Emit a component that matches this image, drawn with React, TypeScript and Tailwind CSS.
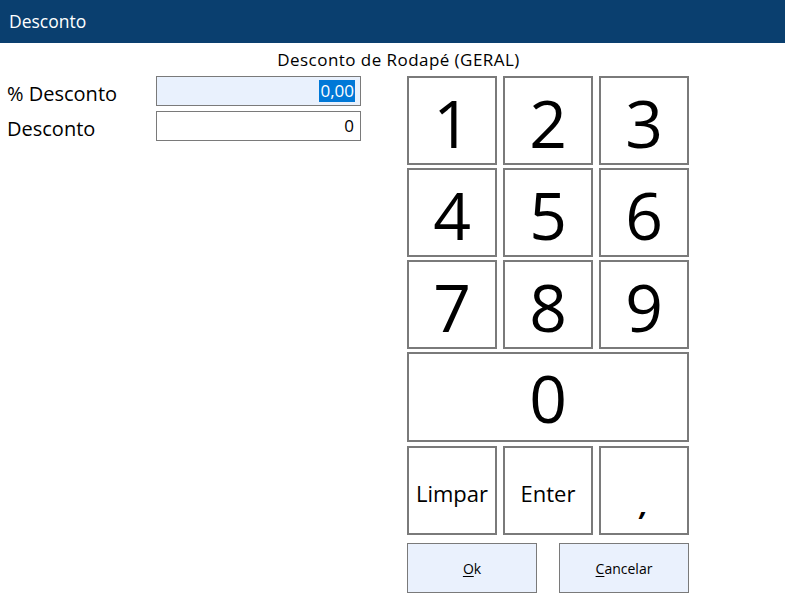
const font = { fontFamily: '"Open Sans", "Noto Sans", sans-serif' };

function Key({ label, className = "" }: { label: string; className?: string }) {
  return (
    <button
      className={`flex items-center justify-center border-2 border-[#7a7a7a] bg-white text-black ${className}`}
    >
      {label}
    </button>
  );
}

export default function App() {
  const digits = ["1", "2", "3", "4", "5", "6", "7", "8", "9"];
  return (
    <div className="h-[599px] w-[785px] overflow-hidden bg-white text-black" style={font}>
      <div className="flex h-[43px] items-center bg-[#0a3f6f] pl-[9px] text-[17.5px] text-white">
        Desconto
      </div>

      <div className="flex h-[33px] items-center justify-center pl-[12px] pt-[1px] text-[17px] tracking-[0.45px]">
        Desconto de Rodapé (GERAL)
      </div>

      <div className="flex">
        <div className="flex w-[407px] flex-col gap-[5px] pl-[7px]">
          <div className="flex h-[30px] items-center">
            <span className="w-[149px] pt-[6px] text-[20px]">% Desconto</span>
            <div className="flex h-[30px] w-[205px] items-center justify-end border border-[#7a7a7a] bg-[#e9f1fd] pr-[5px]">
              <span className="bg-[#0078d7] px-[1px] text-[17px] leading-[22px] text-white">0,00</span>
            </div>
          </div>
          <div className="flex h-[30px] items-center">
            <span className="w-[149px] pt-[6px] text-[20px]">Desconto</span>
            <div className="flex h-[30px] w-[205px] items-center justify-end border border-[#7a7a7a] bg-white pr-[6px]">
              <span className="text-[17px] leading-[22px]">0</span>
            </div>
          </div>
        </div>

        <div className="flex w-[282px] flex-col">
          <div className="grid grid-cols-[90px_90px_90px] gap-x-[6px] gap-y-[3px]">
            {digits.map((d) => (
              <Key key={d} label={d} className="h-[89px] pt-[2px] text-[66px] leading-none" />
            ))}
            <Key label="0" className="col-span-3 h-[90px] text-[66px] leading-none" />
          </div>
          <div className="mt-[4px] grid grid-cols-[90px_90px_90px] gap-x-[6px]">
            <Key label="Limpar" className="h-[89px] pt-[5px] text-[22px]" />
            <Key label="Enter" className="h-[89px] pt-[5px] text-[22px]" />
            <Key label="," className="h-[89px] pt-[26px] text-[28px] font-bold italic" />
          </div>
          <div className="mt-[8px] flex justify-between">
            <button className="flex h-[50px] w-[130px] items-center justify-center border border-[#7a7a7a] bg-[#eaf1fd] text-[14px]">
              <span className="underline underline-offset-2">O</span>k
            </button>
            <button className="flex h-[50px] w-[130px] items-center justify-center border border-[#7a7a7a] bg-[#eaf1fd] text-[14px]">
              <span className="underline underline-offset-2">C</span>ancelar
            </button>
          </div>
        </div>
      </div>
    </div>
  );
}
